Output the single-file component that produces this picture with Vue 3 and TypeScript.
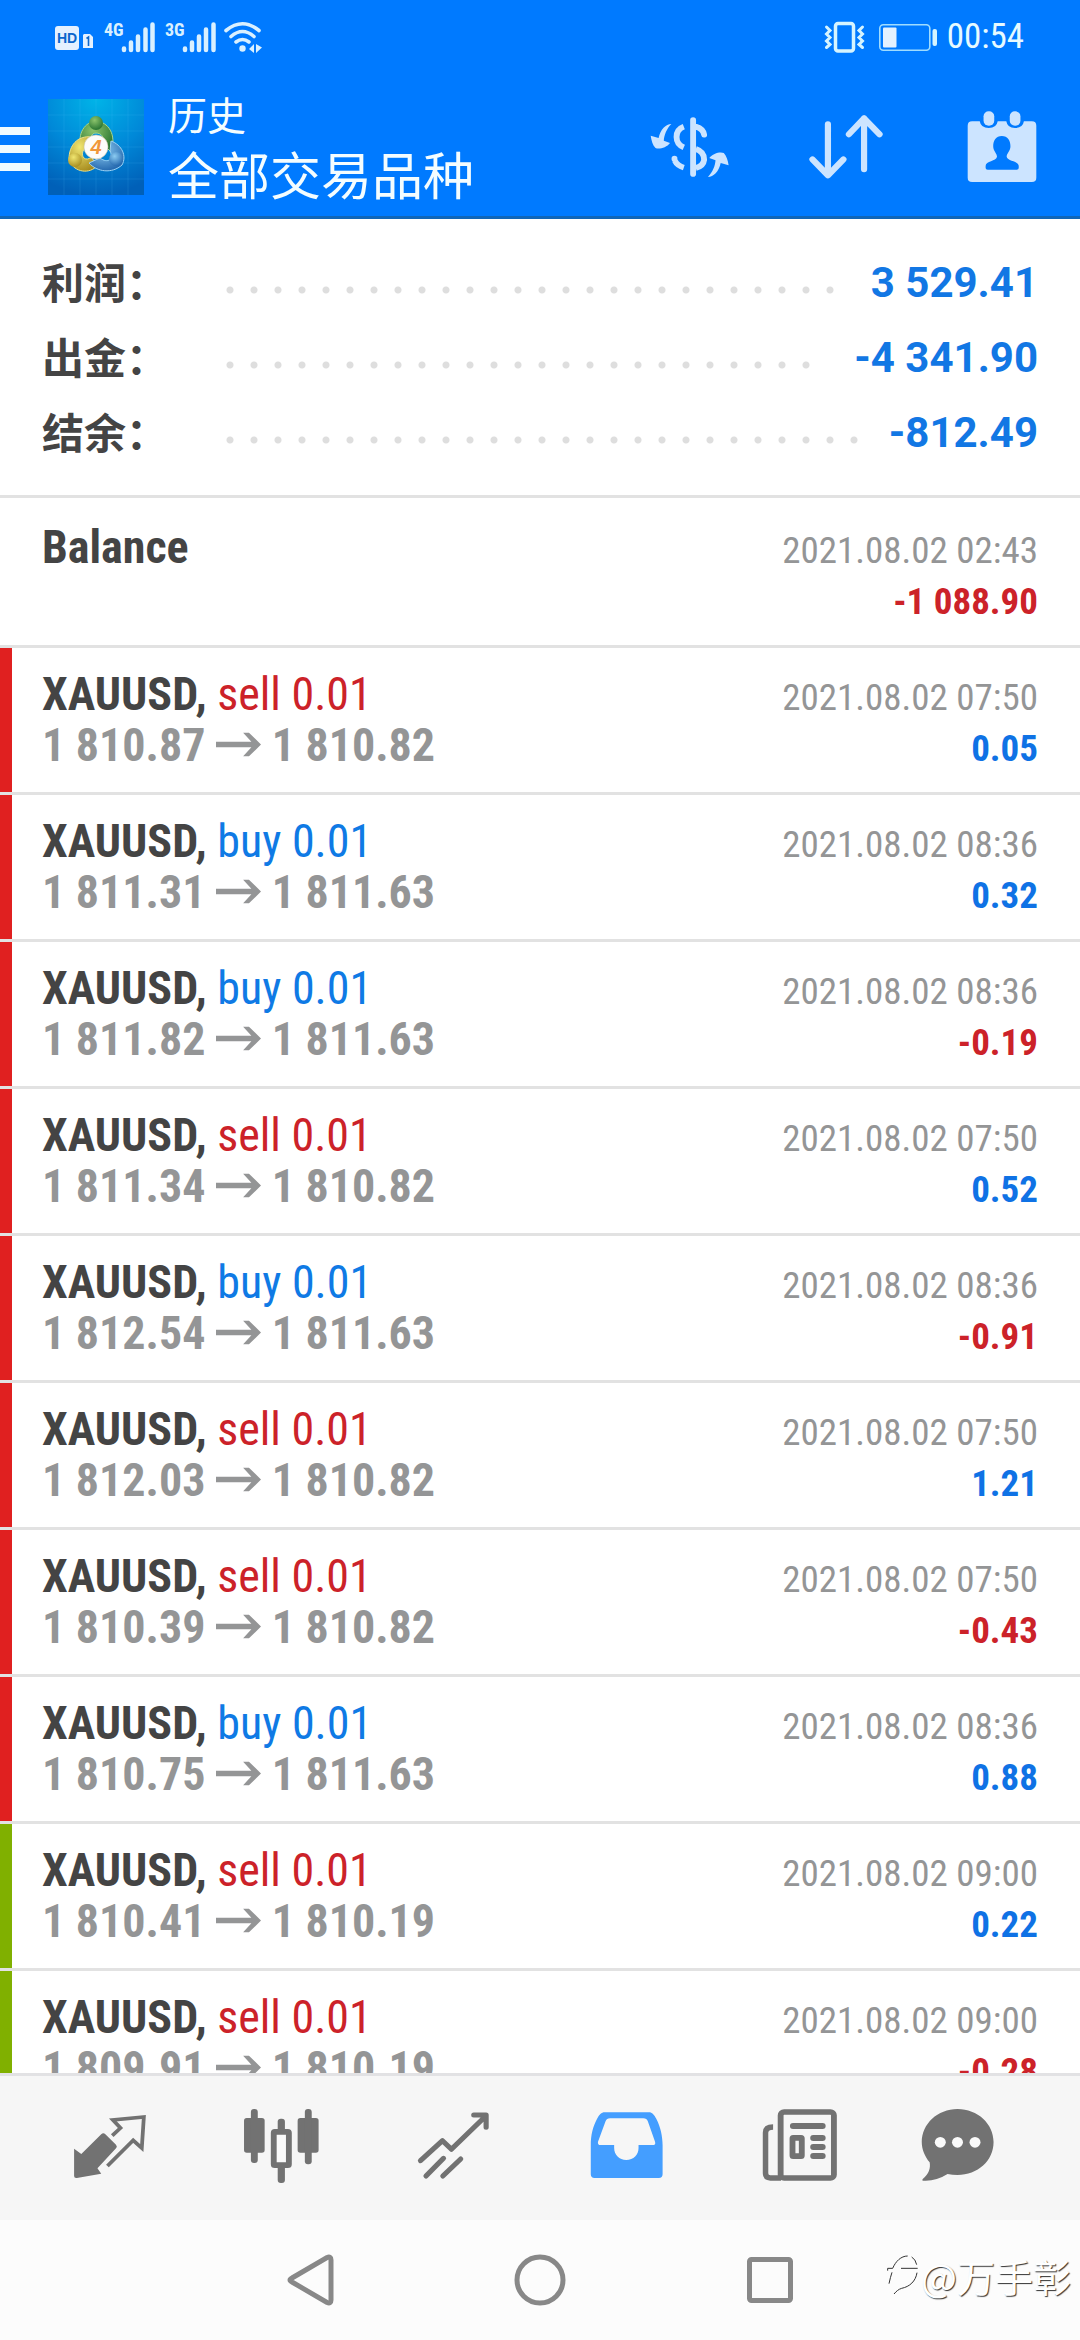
<script setup lang="ts">
interface Summary {
  label: string
  value: string
}

interface Trade {
  side: 'sell' | 'buy'
  from: string
  to: string
  time: string
  profit: string
  bar: 'red' | 'green'
}

const summary: Summary[] = [
  { label: '利润：', value: '3 529.41' },
  { label: '出金：', value: '-4 341.90' },
  { label: '结余：', value: '-812.49' },
]

const trades: Trade[] = [
  { side: 'sell', from: '1 810.87', to: '1 810.82', time: '2021.08.02 07:50', profit: '0.05', bar: 'red' },
  { side: 'buy', from: '1 811.31', to: '1 811.63', time: '2021.08.02 08:36', profit: '0.32', bar: 'red' },
  { side: 'buy', from: '1 811.82', to: '1 811.63', time: '2021.08.02 08:36', profit: '-0.19', bar: 'red' },
  { side: 'sell', from: '1 811.34', to: '1 810.82', time: '2021.08.02 07:50', profit: '0.52', bar: 'red' },
  { side: 'buy', from: '1 812.54', to: '1 811.63', time: '2021.08.02 08:36', profit: '-0.91', bar: 'red' },
  { side: 'sell', from: '1 812.03', to: '1 810.82', time: '2021.08.02 07:50', profit: '1.21', bar: 'red' },
  { side: 'sell', from: '1 810.39', to: '1 810.82', time: '2021.08.02 07:50', profit: '-0.43', bar: 'red' },
  { side: 'buy', from: '1 810.75', to: '1 811.63', time: '2021.08.02 08:36', profit: '0.88', bar: 'red' },
  { side: 'sell', from: '1 810.41', to: '1 810.19', time: '2021.08.02 09:00', profit: '0.22', bar: 'green' },
  { side: 'sell', from: '1 809.91', to: '1 810.19', time: '2021.08.02 09:00', profit: '-0.28', bar: 'green' },
]
</script>

<template>
  <div class="app">
    <header class="top">
      <div class="status">
        <svg class="status-left" viewBox="55 20 208 34" aria-hidden="true">
          <rect x="55" y="26" width="24" height="24" rx="3" fill="#e4f1ff" />
          <text x="67" y="43" text-anchor="middle" class="hd">HD</text>
          <path d="M84 34 H90 L93 37 V48 H83 V35 Z" fill="#e4f1ff" />
          <path d="M86.500 38.500 L88.500 37 V46" fill="none" stroke="#0b66cc" stroke-width="1.600" />
          <text x="104" y="36" class="net">4G</text>
          <text x="165" y="36" class="net">3G</text>
          <g stroke="#d9f0ff" stroke-width="4.500" stroke-linecap="round">
            <path d="M124 48.500V50M131 42.500V50M138 36.500V50M145.500 29.500V50M152.500 24.500V50" />
            <path d="M185 48.500V50M192 42.500V50M199 36.500V50M206 29.500V50M213.500 24.500V50" />
          </g>
          <g fill="none" stroke="#d9f0ff" stroke-width="3.600" stroke-linecap="round">
            <path d="M226 30.500Q242.500 17 259 30.500M231 36.500Q242.500 26.500 254 36.500M236 42Q242.500 37 249 42" />
          </g>
          <circle cx="242.500" cy="48.500" r="3.200" fill="#d9f0ff" />
          <path d="M254 44V53L249 49ZM256 44L262 47.500L256 53Z" fill="#d9f0ff" />
        </svg>
        <svg class="status-right" viewBox="826 20 114 34" aria-hidden="true">
          <rect x="837.500" y="23.500" width="18" height="27.500" rx="2.500" fill="none" stroke="#d5f4ff" stroke-width="3.500" />
          <path d="M828.500 27l3.500 3.500l-3.500 3.500l3.500 3.500l-3.500 3.500l3.500 3.500l-3.500 3M864.500 27l-3.500 3.500l3.500 3.500l-3.500 3.500l3.500 3.500l-3.500 3.500l3.500 3" fill="none" stroke="#d5f4ff" stroke-width="3" stroke-linecap="round" />
          <rect x="881.800" y="24.800" width="50" height="25.500" rx="3.500" fill="none" stroke="#9fdcff" stroke-width="1.600" />
          <rect x="885" y="27.500" width="13.500" height="20" rx="1" fill="#e4f1ff" />
          <rect x="934.500" y="29" width="4.500" height="17" rx="2" fill="#d5f4ff" />
        </svg>
        <span class="clock">00:54</span>
      </div>

      <div class="bar">
        <button class="menu" type="button" aria-label="菜单"><i></i><i></i><i></i></button>
        <svg class="logo" viewBox="0 0 96 96" aria-hidden="true">
          <defs>
            <radialGradient id="bg" cx=".5" cy="0" r="1">
              <stop offset="0" stop-color="#00b4e8" />
              <stop offset=".55" stop-color="#0088d8" />
              <stop offset="1" stop-color="#0060b8" />
            </radialGradient>
            <radialGradient id="gr" cx=".4" cy=".3" r=".8">
              <stop offset="0" stop-color="#8cc46c" />
              <stop offset="1" stop-color="#1c6a2a" />
            </radialGradient>
            <radialGradient id="ye" cx=".4" cy=".3" r=".8">
              <stop offset="0" stop-color="#f0e670" />
              <stop offset="1" stop-color="#a08418" />
            </radialGradient>
            <radialGradient id="bl" cx=".4" cy=".3" r=".8">
              <stop offset="0" stop-color="#8cccf2" />
              <stop offset="1" stop-color="#185ca6" />
            </radialGradient>
          </defs>
          <rect width="96" height="96" fill="url(#bg)" />
          <path d="M0 16H96M0 32H96M0 48H96M0 64H96M0 80H96M16 0V96M32 0V96M48 0V96M64 0V96M80 0V96" stroke="#5cc6ff" stroke-opacity=".14" />
          <path d="M33 50C29 34 37 23 48 22C60 23 69 35 63 53L54 44C57 38 53 34 48 34C43 34 41 40 44 45Z" fill="url(#gr)" stroke="#a6d488" stroke-width="1" />
          <path d="M44 38C29 36 21 47 21 60C24 72 39 76 48 68L44 58C37 63 33 58 35 52Z" fill="url(#ye)" stroke="#e9e088" stroke-width="1" />
          <path d="M63 42C74 46 79 57 74 66C64 75 49 73 41 64L52 59C60 65 66 60 62 52Z" fill="url(#bl)" stroke="#9fd4f5" stroke-width="1" />
          <circle cx="48" cy="24" r="7" fill="url(#gr)" />
          <circle cx="27" cy="61" r="7" fill="url(#ye)" />
          <circle cx="68" cy="60" r="7" fill="url(#bl)" />
          <circle cx="48" cy="48" r="12" fill="#fdfcfa" stroke="#c9c2a8" stroke-width=".6" />
          <text x="48" y="55" text-anchor="middle" class="four">4</text>
        </svg>
        <div class="titles">
          <span class="sub">历史</span>
          <h1 class="title">全部交易品种</h1>
        </div>
        <button class="action" type="button" aria-label="货币">
          <svg width="80" height="60" viewBox="320 345 232 180" preserveAspectRatio="none">
            <g fill="none" stroke="#cce4ff" stroke-width="17">
              <path d="M445 354V516M454 374Q474 380 477 398" stroke-linecap="round" />
              <path d="M418 374Q397 382 397 405Q397 427 418 436M453 441Q477 449 477 473Q475 492 453 498M418 497Q399 491 392 476" />
              <path d="M391 470V471" stroke-linecap="round" />
            </g>
            <path d="M382 366C366 366 350 382 345 408L322 401C324 415 328 430 336 438C346 443 368 437 378 423L360 416C361 400 368 380 382 366Z" fill="#cce4ff" />
            <path d="M382 366C366 366 350 382 345 408L322 401C324 415 328 430 336 438C346 443 368 437 378 423L360 416C361 400 368 380 382 366Z" fill="#cce4ff" transform="rotate(180 435 445.500)" />
          </svg>
        </button>
        <button class="action" type="button" aria-label="排序">
          <svg width="74" height="64" viewBox="781 344 215 192" preserveAspectRatio="none" fill="none" stroke="#cce4ff" stroke-width="18" stroke-linecap="round" stroke-linejoin="round">
            <path d="M836 372V525M791 477L836 525L881 477M941 507V354M897 402L941 354L986 402" />
          </svg>
        </button>
        <button class="action" type="button" aria-label="日期">
          <svg width="70" height="72" viewBox="1240 331 203 216" preserveAspectRatio="none">
            <path d="M1255 362H1277Q1280 382 1303 382Q1326 382 1329 362H1354Q1357 382 1379 382Q1402 382 1405 362H1428Q1441 362 1441 375V531Q1441 544 1428 544H1255Q1242 544 1242 531V375Q1242 362 1255 362Z" fill="#cce4ff" />
            <rect x="1288" y="332" width="31" height="43" rx="15" fill="#cce4ff" />
            <rect x="1364" y="332" width="31" height="43" rx="15" fill="#cce4ff" />
            <path d="M1341 406C1358 406 1366 419 1366 437C1366 452 1355 458 1355 468C1357 482 1390 480 1390 496V502Q1390 507 1384 507H1300Q1294 507 1294 502V496C1294 480 1325 482 1327 468C1327 458 1316 452 1316 437C1316 419 1324 406 1341 406Z" fill="#007aff" />
          </svg>
        </button>
      </div>
    </header>

    <main class="content">
      <dl class="summary">
        <div v-for="s in summary" :key="s.label" class="sum-row">
          <dt>{{ s.label }}</dt>
          <span class="dots" aria-hidden="true"><i v-for="n in 40" :key="n"></i></span>
          <dd>{{ s.value }}</dd>
        </div>
      </dl>

      <ul class="list">
        <li class="row balance">
          <div class="line">
            <b class="symbol">Balance</b>
            <span class="time">2021.08.02 02:43</span>
          </div>
          <div class="line end">
            <span class="profit neg">-1 088.90</span>
          </div>
        </li>
        <li v-for="(t, i) in trades" :key="i" class="row" :class="t.bar">
          <div class="line">
            <span><b class="symbol">XAUUSD,</b> <span class="side" :class="t.side">{{ t.side }} 0.01</span></span>
            <span class="time">{{ t.time }}</span>
          </div>
          <div class="line">
            <span class="prices">{{ t.from }} <svg class="arrow" viewBox="621 697 131 76" preserveAspectRatio="none" aria-label="→"><path d="M621 727H724L700 699H717L752 735L717 771H700L724 743H621Z" fill="#949596" /></svg> {{ t.to }}</span>
            <span class="profit" :class="{ neg: t.profit.startsWith('-') }">{{ t.profit }}</span>
          </div>
        </li>
      </ul>
    </main>

    <nav class="tabs">
      <button type="button" aria-label="行情">
        <svg viewBox="206 447 227 234" preserveAspectRatio="none">
          <path d="M215 566L236 582L294 523Q300 517 306 523L337 554Q342 560 337 565L283 625L294 641L223 654Q215 655 215 648Z" fill="#727272" />
          <path d="M326 527L350 504L328 480L418 471L412 564L387 541L312 618" fill="none" stroke="#727272" stroke-width="11" />
        </svg>
      </button>
      <button type="button" aria-label="图表">
        <svg viewBox="706 447 227 234" preserveAspectRatio="none" fill="#727272">
          <rect x="709" y="474" width="60" height="104" rx="8" />
          <rect x="729" y="447" width="20" height="162" rx="9" />
          <rect x="865" y="474" width="61" height="104" rx="8" />
          <rect x="886" y="447" width="20" height="166" rx="9" />
          <rect x="807" y="476" width="21" height="193" rx="9" />
          <rect x="795.500" y="515.500" width="44" height="100" rx="3" fill="#fafafa" stroke="#727272" stroke-width="17" />
        </svg>
      </button>
      <button type="button" aria-label="交易">
        <svg viewBox="1205 447 227 234" preserveAspectRatio="none" fill="none" stroke="#727272" stroke-width="15" stroke-linecap="round" stroke-linejoin="round">
          <path d="M1221 602L1285 542L1311 568L1411 468M1376 465H1412V502M1237 648L1288 595M1286 648L1338 597" />
        </svg>
      </button>
      <button type="button" aria-label="历史">
        <svg viewBox="136 447 227 234" preserveAspectRatio="none">
          <path d="M188 457H316C326 457 331 464 338 477C350 500 356 530 356 556V643Q356 654 345 654H158Q147 654 147 643V556C147 525 153 500 165 477C172 464 177 457 188 457ZM203 475Q193 475 190 484L168 545Q166 555 176 555H215V564C215 584 230 600 250 600C272 600 286 584 286 564V555H327Q337 555 334 545L313 484Q310 475 300 475Z" fill="#449eff" fill-rule="evenodd" />
        </svg>
      </button>
      <button type="button" aria-label="新闻">
        <svg viewBox="636 447 227 234" preserveAspectRatio="none" fill="none" stroke="#727272" stroke-width="17">
          <rect x="699" y="456" width="155" height="198" rx="10" />
          <path d="M677 501Q655 501 655 518V640Q655 654 669 654H700" stroke-width="16" />
          <path d="M735 498H821M794 534H821M794 561H821M794 588H821" stroke-linecap="round" stroke-width="18" />
          <rect x="733.500" y="533.500" width="27" height="55" rx="2" />
        </svg>
      </button>
      <button type="button" aria-label="消息">
        <svg viewBox="1101 447 227 234" preserveAspectRatio="none" fill="#727272">
          <path d="M1213 447C1272 447 1318 492 1318 546C1318 602 1272 645 1213 645Q1198 645 1184 642C1160 657 1138 664 1112 662Q1109 660 1112 657C1130 642 1135 625 1132 607C1118 590 1109 568 1109 546C1109 492 1155 447 1213 447Z" />
          <g fill="#fafafa">
            <circle cx="1163" cy="547" r="16" />
            <circle cx="1213" cy="547" r="16" />
            <circle cx="1264" cy="547" r="16" />
          </g>
        </svg>
      </button>
    </nav>

    <footer class="system">
      <button type="button" aria-label="返回">
        <svg width="52" height="52" viewBox="0 0 52 52"><path d="M8 24L43 3.500Q47 2 47 6V46Q47 50 43 48.500L8 28Q4 26 8 24Z" /></svg>
      </button>
      <button type="button" aria-label="主页">
        <svg width="52" height="52" viewBox="0 0 52 52"><circle cx="26" cy="26" r="23" /></svg>
      </button>
      <button type="button" aria-label="最近">
        <svg width="52" height="52" viewBox="0 0 52 52"><rect x="5.500" y="5.500" width="41" height="41" rx="2" /></svg>
      </button>
      <div class="mark">
        <svg width="34" height="44" viewBox="76 128 102 132" fill="none" aria-hidden="true">
          <path d="M78 178V171H93C102 150 118 134 138 134M150 137Q162 144 165 160M91 183Q86 198 82 217M118 171H168M166 184C162 210 144 226 120 231C110 234 104 240 97 248" stroke="#333" stroke-width="3" />
        </svg>
        <span>@万手彰</span>
      </div>
    </footer>
  </div>
</template>

<style>
body {
  background: #fff;
}
</style>

<style scoped>
.app {
  display: flex;
  flex-direction: column;
  height: 100vh;
  font-family: "Roboto Condensed", "Liberation Sans Narrow", Roboto, "Noto Sans CJK SC", sans-serif;
  background: #fff;
}

button {
  display: flex;
  align-items: center;
  justify-content: center;
  padding: 0;
  border: 0;
  background: none;
}

.top {
  flex: none;
  background: #007aff;
  border-bottom: 3px solid #1066b8;
}

.status {
  display: flex;
  align-items: center;
  height: 74px;
  padding: 0 56px 2px 55px;
}

.status-left {
  width: 208px;
  height: 34px;
}

.status-right {
  width: 114px;
  height: 34px;
  margin-left: auto;
}

.hd {
  font: bold 14px "Liberation Sans", sans-serif;
  fill: #0b66cc;
}

.net {
  font: bold 18px "Roboto Condensed", "Liberation Sans Narrow", sans-serif;
  fill: #d9f0ff;
}

.four {
  font: italic bold 20px "Liberation Sans", sans-serif;
  fill: #f0973a;
}

.clock {
  margin-left: 9px;
  font-size: 35px;
  line-height: 40px;
  color: #e6faff;
}

.bar {
  display: flex;
  align-items: center;
  height: 138px;
  padding-top: 2px;
}

.menu {
  flex-direction: column;
  align-items: stretch;
  gap: 10px;
  width: 30px;
  padding-top: 4px;
}

.menu i {
  height: 8px;
  background: #f0fbff;
}

.logo {
  width: 96px;
  height: 96px;
  margin-left: 18px;
}

.titles {
  display: flex;
  flex: 1;
  flex-direction: column;
  margin-left: 24px;
  padding-bottom: 4px;
  font-family: "Noto Sans CJK SC", sans-serif;
  color: #f4fdff;
}

.sub {
  font-size: 39px;
  line-height: 56px;
}

.title {
  margin: 0;
  font-size: 51px;
  font-weight: 400;
  line-height: 64px;
}

.action {
  width: 156px;
  height: 138px;
}

.content {
  flex: 1;
  min-height: 0;
  overflow: hidden;
}

.summary {
  margin: 0;
  padding: 26px 42px 25px;
  border-bottom: 3px solid #e2e2e2;
}

.sum-row {
  display: flex;
  align-items: center;
  height: 75px;
  font-size: 42px;
  font-weight: 700;
  line-height: 75px;
}

dt {
  width: 176px;
  padding-bottom: 4px;
  font-family: "Noto Sans CJK SC", sans-serif;
  color: #444;
}

dd {
  margin: 0;
  font-family: Roboto, sans-serif;
  color: #1277e4;
}

.dots {
  display: flex;
  flex: 1;
  flex-wrap: wrap;
  height: 24px;
  margin-right: 20px;
  overflow: hidden;
}

.dots i {
  width: 24px;
  height: 24px;
  background: radial-gradient(circle at 12px 19px, #dedede 3px, transparent 4px);
}

.list {
  margin: 0;
  padding: 0;
  list-style: none;
}

.row {
  padding: 21px 42px;
  border-bottom: 3px solid #e2e2e2;
}

.balance {
  padding-top: 24px;
}

.red {
  background: linear-gradient(#e02020, #e02020) 0 0 / 12px 100% no-repeat padding-box;
}

.green {
  background: linear-gradient(#80b000, #80b000) 0 0 / 12px 100% no-repeat padding-box;
}

.line {
  display: flex;
  align-items: baseline;
  justify-content: space-between;
  height: 51px;
  font-size: 46px;
  line-height: 51px;
  white-space: nowrap;
}

.line.end {
  justify-content: flex-end;
}

.line.end::before {
  content: "\200b";
}

.symbol {
  color: #444;
}

.sell {
  color: #cc2229;
}

.buy {
  color: #0f7ae5;
}

.time {
  font-size: 37px;
  color: #949596;
}

.prices {
  font-weight: 700;
  color: #949596;
}

.arrow {
  width: 45px;
  height: 25px;
  vertical-align: 4px;
}

.profit {
  font-size: 37px;
  font-weight: 700;
  color: #0f72e5;
}

.profit.neg {
  color: #cc2229;
}

.tabs {
  display: flex;
  flex: none;
  height: 144px;
  padding: 0 48px 0 24px;
  border-top: 3px solid #e2e2e4;
  background: #f6f6f6;
}

.tabs button {
  flex: 172;
}

.tabs button:last-child {
  flex: 148;
}

.tabs svg {
  width: 78px;
  height: 78px;
}

.system {
  position: relative;
  display: flex;
  flex: none;
  justify-content: center;
  height: 120px;
  background: #fcfcfc;
}

.system button {
  width: 230px;
}

.system button svg {
  fill: none;
  stroke: #888;
  stroke-width: 5;
}

.mark {
  position: absolute;
  right: 9px;
  bottom: 38px;
  display: flex;
  align-items: center;
  font-family: "Noto Sans CJK SC", sans-serif;
  font-size: 38px;
  line-height: 52px;
  color: #fff;
  text-shadow: 1px 1px 1px #333;
}
</style>
